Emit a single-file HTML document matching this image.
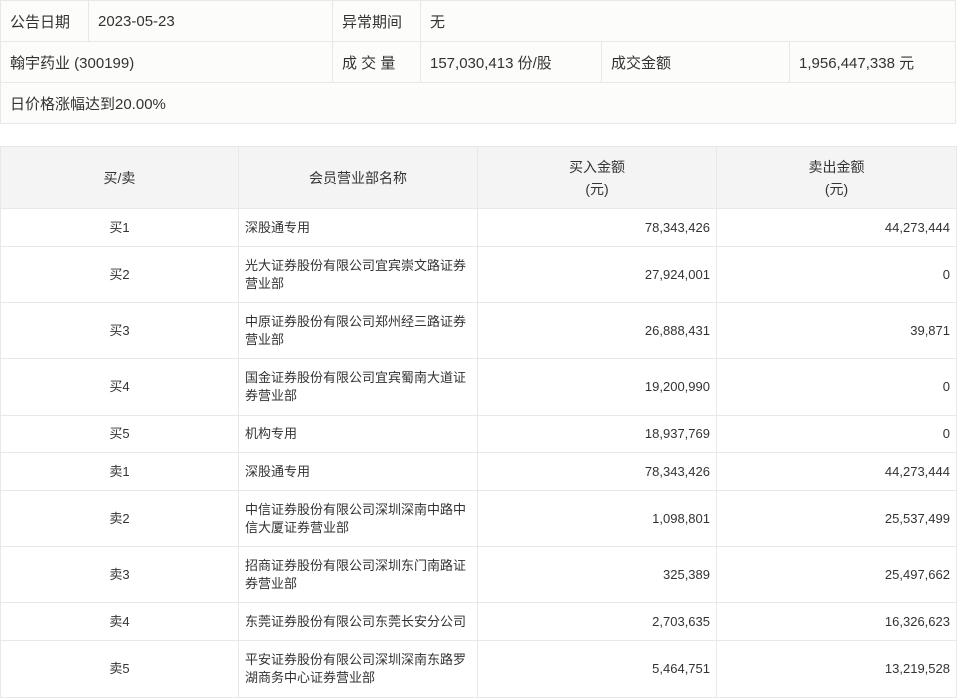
<!DOCTYPE html>
<html><head><meta charset="utf-8"><style>
*{margin:0;padding:0;box-sizing:border-box}
body{width:958px;height:699px;background:#fff;font-family:"Liberation Sans","Noto Sans CJK SC",sans-serif;color:#333;position:relative;overflow:hidden}
table{border-collapse:collapse;position:absolute;left:0;table-layout:fixed}
td{border:1px solid #e8e8e8;}
.t1{top:0;width:956px;background:#fcfcfa;font-size:15px}
.t1 td{height:41px;padding:0 9px}
.t2{top:146px;width:957px;font-size:13px}
.t2 th{background:#f4f4f4;font-weight:normal;border:1px solid #e8e8e8;height:62px;font-size:14px;line-height:22px}
.t2 td{padding:0 6px;line-height:18px}
.c{text-align:center}.r{text-align:right}
</style></head><body>
<table class="t1">
<colgroup><col style="width:88px"><col style="width:244px"><col style="width:88px"><col style="width:181px"><col style="width:188px"><col></colgroup>
<tr><td>公告日期</td><td>2023-05-23</td><td>异常期间</td><td colspan="3">无</td></tr>
<tr><td colspan="2">翰宇药业 (300199)</td><td>成 交 量</td><td>157,030,413 份/股</td><td>成交金额</td><td>1,956,447,338 元</td></tr>
<tr><td colspan="6">日价格涨幅达到20.00%</td></tr>
</table>
<table class="t2">
<colgroup><col style="width:238px"><col style="width:239px"><col style="width:239px"><col></colgroup>
<tr><th>买/卖</th><th>会员营业部名称</th><th>买入金额<br>(元)</th><th>卖出金额<br>(元)</th></tr>
<tr style="height:38px"><td class="c">买1</td><td>深股通专用</td><td class="r">78,343,426</td><td class="r">44,273,444</td></tr>
<tr style="height:56px"><td class="c">买2</td><td>光大证券股份有限公司宜宾崇文路证券营业部</td><td class="r">27,924,001</td><td class="r">0</td></tr>
<tr style="height:56px"><td class="c">买3</td><td>中原证券股份有限公司郑州经三路证券营业部</td><td class="r">26,888,431</td><td class="r">39,871</td></tr>
<tr style="height:57px"><td class="c">买4</td><td>国金证券股份有限公司宜宾蜀南大道证券营业部</td><td class="r">19,200,990</td><td class="r">0</td></tr>
<tr style="height:37px"><td class="c">买5</td><td>机构专用</td><td class="r">18,937,769</td><td class="r">0</td></tr>
<tr style="height:38px"><td class="c">卖1</td><td>深股通专用</td><td class="r">78,343,426</td><td class="r">44,273,444</td></tr>
<tr style="height:56px"><td class="c">卖2</td><td>中信证券股份有限公司深圳深南中路中信大厦证券营业部</td><td class="r">1,098,801</td><td class="r">25,537,499</td></tr>
<tr style="height:56px"><td class="c">卖3</td><td>招商证券股份有限公司深圳东门南路证券营业部</td><td class="r">325,389</td><td class="r">25,497,662</td></tr>
<tr style="height:38px"><td class="c">卖4</td><td>东莞证券股份有限公司东莞长安分公司</td><td class="r">2,703,635</td><td class="r">16,326,623</td></tr>
<tr style="height:57px"><td class="c">卖5</td><td>平安证券股份有限公司深圳深南东路罗湖商务中心证券营业部</td><td class="r">5,464,751</td><td class="r">13,219,528</td></tr>
</table>
</body></html>
